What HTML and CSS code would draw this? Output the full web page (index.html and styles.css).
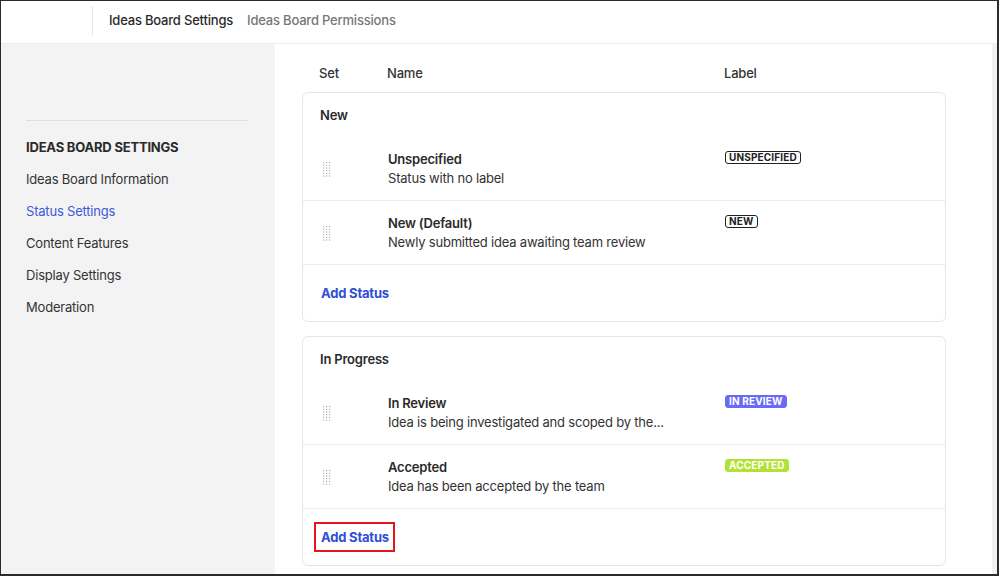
FILE: index.html
```html
<!DOCTYPE html>
<html lang="en">
<head>
<meta charset="utf-8">
<title>Ideas Board Settings</title>
<link rel="stylesheet" href="styles.css">
</head>
<body>
<div class="frame">
  <header class="topbar">
    <div class="brand"><span class="divider"></span></div>
    <nav class="tabs">
      <span class="tab active">Ideas Board Settings</span>
      <span class="tab">Ideas Board Permissions</span>
    </nav>
  </header>
  <div class="body">
    <aside class="sidebar">
      <hr class="rule">
      <div class="side-title">IDEAS BOARD SETTINGS</div>
      <ul class="side-nav">
        <li>Ideas Board Information</li>
        <li class="current">Status Settings</li>
        <li>Content Features</li>
        <li>Display Settings</li>
        <li>Moderation</li>
      </ul>
    </aside>
    <main class="content">
      <div class="cols">
        <span>Set</span><span>Name</span><span>Label</span>
      </div>

      <section class="card">
        <div class="card-title">New</div>
        <div class="row">
          <span class="handle"><svg width="8" height="15" viewBox="0 0 8 15"><g fill="#b5b5b5"><rect x="0" y="0" width="1.2" height="1.2"/><rect x="3" y="0" width="1.2" height="1.2"/><rect x="6" y="0" width="1.2" height="1.2"/><rect x="0" y="2.7" width="1.2" height="1.2"/><rect x="3" y="2.7" width="1.2" height="1.2"/><rect x="6" y="2.7" width="1.2" height="1.2"/><rect x="0" y="5.4" width="1.2" height="1.2"/><rect x="3" y="5.4" width="1.2" height="1.2"/><rect x="6" y="5.4" width="1.2" height="1.2"/><rect x="0" y="8.1" width="1.2" height="1.2"/><rect x="3" y="8.1" width="1.2" height="1.2"/><rect x="6" y="8.1" width="1.2" height="1.2"/><rect x="0" y="10.8" width="1.2" height="1.2"/><rect x="3" y="10.8" width="1.2" height="1.2"/><rect x="6" y="10.8" width="1.2" height="1.2"/><rect x="0" y="13.5" width="1.2" height="1.2"/><rect x="3" y="13.5" width="1.2" height="1.2"/><rect x="6" y="13.5" width="1.2" height="1.2"/></g></svg></span>
          <div class="info"><div class="name">Unspecified</div><div class="desc">Status with no label</div></div>
          <div class="label"><span class="badge outline">UNSPECIFIED</span></div>
        </div>
        <div class="row">
          <span class="handle"><svg width="8" height="15" viewBox="0 0 8 15"><g fill="#b5b5b5"><rect x="0" y="0" width="1.2" height="1.2"/><rect x="3" y="0" width="1.2" height="1.2"/><rect x="6" y="0" width="1.2" height="1.2"/><rect x="0" y="2.7" width="1.2" height="1.2"/><rect x="3" y="2.7" width="1.2" height="1.2"/><rect x="6" y="2.7" width="1.2" height="1.2"/><rect x="0" y="5.4" width="1.2" height="1.2"/><rect x="3" y="5.4" width="1.2" height="1.2"/><rect x="6" y="5.4" width="1.2" height="1.2"/><rect x="0" y="8.1" width="1.2" height="1.2"/><rect x="3" y="8.1" width="1.2" height="1.2"/><rect x="6" y="8.1" width="1.2" height="1.2"/><rect x="0" y="10.8" width="1.2" height="1.2"/><rect x="3" y="10.8" width="1.2" height="1.2"/><rect x="6" y="10.8" width="1.2" height="1.2"/><rect x="0" y="13.5" width="1.2" height="1.2"/><rect x="3" y="13.5" width="1.2" height="1.2"/><rect x="6" y="13.5" width="1.2" height="1.2"/></g></svg></span>
          <div class="info"><div class="name">New (Default)</div><div class="desc">Newly submitted idea awaiting team review</div></div>
          <div class="label"><span class="badge outline">NEW</span></div>
        </div>
        <div class="add-row"><a class="add">Add Status</a></div>
      </section>

      <section class="card">
        <div class="card-title">In Progress</div>
        <div class="row">
          <span class="handle"><svg width="8" height="15" viewBox="0 0 8 15"><g fill="#b5b5b5"><rect x="0" y="0" width="1.2" height="1.2"/><rect x="3" y="0" width="1.2" height="1.2"/><rect x="6" y="0" width="1.2" height="1.2"/><rect x="0" y="2.7" width="1.2" height="1.2"/><rect x="3" y="2.7" width="1.2" height="1.2"/><rect x="6" y="2.7" width="1.2" height="1.2"/><rect x="0" y="5.4" width="1.2" height="1.2"/><rect x="3" y="5.4" width="1.2" height="1.2"/><rect x="6" y="5.4" width="1.2" height="1.2"/><rect x="0" y="8.1" width="1.2" height="1.2"/><rect x="3" y="8.1" width="1.2" height="1.2"/><rect x="6" y="8.1" width="1.2" height="1.2"/><rect x="0" y="10.8" width="1.2" height="1.2"/><rect x="3" y="10.8" width="1.2" height="1.2"/><rect x="6" y="10.8" width="1.2" height="1.2"/><rect x="0" y="13.5" width="1.2" height="1.2"/><rect x="3" y="13.5" width="1.2" height="1.2"/><rect x="6" y="13.5" width="1.2" height="1.2"/></g></svg></span>
          <div class="info"><div class="name">In Review</div><div class="desc">Idea is being investigated and scoped by the...</div></div>
          <div class="label"><span class="badge review">IN REVIEW</span></div>
        </div>
        <div class="row">
          <span class="handle"><svg width="8" height="15" viewBox="0 0 8 15"><g fill="#b5b5b5"><rect x="0" y="0" width="1.2" height="1.2"/><rect x="3" y="0" width="1.2" height="1.2"/><rect x="6" y="0" width="1.2" height="1.2"/><rect x="0" y="2.7" width="1.2" height="1.2"/><rect x="3" y="2.7" width="1.2" height="1.2"/><rect x="6" y="2.7" width="1.2" height="1.2"/><rect x="0" y="5.4" width="1.2" height="1.2"/><rect x="3" y="5.4" width="1.2" height="1.2"/><rect x="6" y="5.4" width="1.2" height="1.2"/><rect x="0" y="8.1" width="1.2" height="1.2"/><rect x="3" y="8.1" width="1.2" height="1.2"/><rect x="6" y="8.1" width="1.2" height="1.2"/><rect x="0" y="10.8" width="1.2" height="1.2"/><rect x="3" y="10.8" width="1.2" height="1.2"/><rect x="6" y="10.8" width="1.2" height="1.2"/><rect x="0" y="13.5" width="1.2" height="1.2"/><rect x="3" y="13.5" width="1.2" height="1.2"/><rect x="6" y="13.5" width="1.2" height="1.2"/></g></svg></span>
          <div class="info"><div class="name">Accepted</div><div class="desc">Idea has been accepted by the team</div></div>
          <div class="label"><span class="badge accepted">ACCEPTED</span></div>
        </div>
        <div class="add-row"><a class="add highlight">Add Status</a></div>
      </section>
    </main>
    <div class="scrollstrip"></div>
  </div>
</div>
</body>
</html>
```

FILE: styles.css
```css
* { box-sizing: border-box; }
html, body { margin: 0; padding: 0; background: #fff; }
body {
  font-family: Inter, "Noto Sans", "Liberation Sans", sans-serif;
  font-size: 13px;
  letter-spacing: -0.2px;
  color: #2a2a2a;
}
.frame {
  width: 999px;
  height: 576px;
  border: 1px solid #2b2b2b;
  border-right-width: 2px;
  border-bottom-width: 2px;
  display: flex;
  flex-direction: column;
  overflow: hidden;
}
.topbar {
  height: 43px;
  flex: 0 0 43px;
  border-bottom: 1px solid #ececec;
  display: flex;
  align-items: center;
  background: #fff;
}
.brand {
  width: 92px;
  height: 100%;
  display: flex;
  justify-content: flex-end;
  padding-top: 5px;
}
.divider {
  width: 1px;
  height: 30px;
  background: #e6e6e6;
}
.tabs {
  display: flex;
  gap: 14px;
  padding-left: 16px;
  padding-bottom: 4px;
  font-weight: 500;
}
.tab { color: #777; }
.tab.active { color: #2a2a2a; }

.body {
  flex: 1;
  display: flex;
  min-height: 0;
}
.sidebar {
  width: 274px;
  flex: 0 0 274px;
  background: #f3f3f3;
  padding: 76px 27px 0 25px;
}
.rule {
  border: 0;
  border-top: 1px solid #dedede;
  margin: 0 0 10px;
}
.side-title {
  line-height: 32px;
  font-weight: 700;
  color: #2a2a2a;
}
.side-nav {
  list-style: none;
  margin: 0;
  padding: 0;
}
.side-nav li {
  line-height: 32px;
  color: #333;
}
.side-nav li.current { color: #3b5bdb; }

.content {
  flex: 1;
  padding: 0 46px 0 27px;
}
.scrollstrip {
  width: 5px;
  flex: 0 0 5px;
  background: #f1f1f1;
}
.cols {
  display: grid;
  grid-template-columns: 68px 337px 1fr;
  padding: 20px 0 10px 17px;
  line-height: 18px;
  font-weight: 500;
  color: #333;
}
.card {
  border: 1px solid #e6e6e6;
  border-radius: 6px;
  margin-bottom: 14px;
}
.card-title {
  height: 44px;
  padding: 13px 17px 0;
  line-height: 18px;
  font-weight: 600;
}
.row {
  display: grid;
  grid-template-columns: 65px 337px 1fr;
  height: 64px;
  padding: 13px 0 0 20px;
  border-bottom: 1px solid #ececec;
}
.handle {
  align-self: center;
  margin-top: -13px;
  display: flex;
  padding-top: 1px;
}
.name {
  font-weight: 600;
  line-height: 18px;
}
.desc {
  line-height: 20px;
  color: #333;
}
.label {
  display: flex;
  align-items: flex-start;
  padding-top: 1px;
}
.badge {
  display: block;
  height: 13px;
  line-height: 11px;
  font-size: 10px;
  font-weight: 700;
  letter-spacing: 0.15px;
  padding: 0 3px;
  border-radius: 3px;
  border: 1px solid transparent;
}
.badge.outline {
  border-color: #222;
  color: #222;
}
.badge.review {
  background: #6a6af5;
  border-color: #6a6af5;
  color: #fff;
}
.badge.accepted {
  background: #b2e236;
  border-color: #b2e236;
  color: #fff;
}
.add-row {
  height: 56px;
  padding-left: 18px;
  display: flex;
  align-items: center;
}
.add {
  color: #2f4fd5;
  font-weight: 700;
  line-height: 20px;
  position: relative;
}
.add.highlight::after {
  content: "";
  position: absolute;
  top: -5px;
  bottom: -5px;
  left: -7px;
  right: -6px;
  border: 2px solid #e4161b;
}
```
